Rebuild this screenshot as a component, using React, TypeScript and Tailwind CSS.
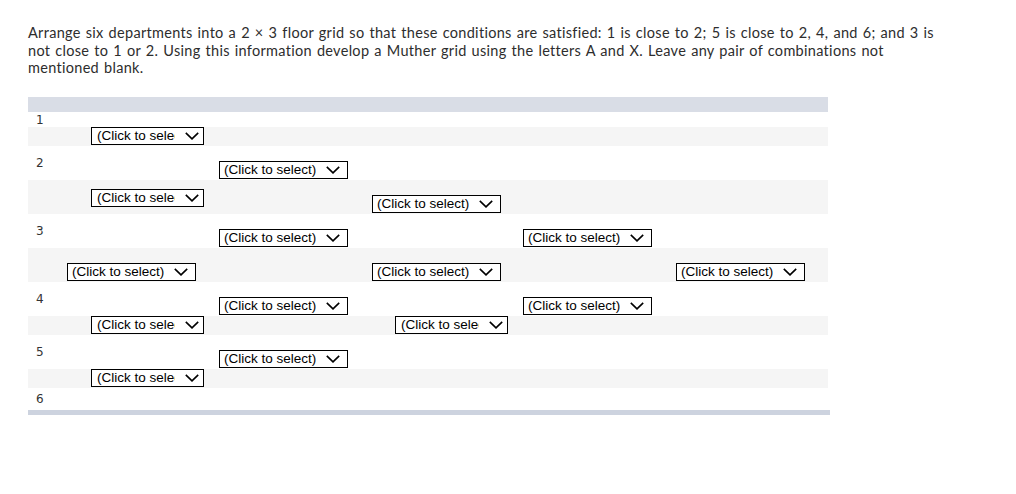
function Chevron() {
  return (
    <svg width="14" height="8" viewBox="0 0 14 8" className="shrink-0">
      <path d="M0.8 0.9 L7 6.9 L13.2 0.9" fill="none" stroke="#000" strokeWidth="1.6" />
    </svg>
  )
}

function Pick({ short = false, className = '' }: { short?: boolean; className?: string }) {
  return (
    <div
      className={`flex h-[18px] shrink-0 items-center border border-black bg-white ${
        short ? 'w-[113px] pl-[5px]' : 'w-[129px] pl-[4px]'
      } ${className}`}
    >
      <span
        className={`overflow-hidden whitespace-nowrap font-['Liberation_Sans',Arial,sans-serif] text-[13.5px] leading-[16px] text-black ${
          short ? 'w-[78px]' : 'w-[92px]'
        }`}
      >
        (Click to select)
      </span>
      <span className="ml-[10px] flex">
        <Chevron />
      </span>
    </div>
  )
}

function Num({ n }: { n?: string }) {
  return (
    <div className="w-[39px] shrink-0 self-center pl-[8px] font-['DejaVu_Sans',sans-serif] text-[12px] leading-[14px] text-[#333]">
      {n}
    </div>
  )
}

export default function App() {
  return (
    <div className="min-h-[494px] w-[1016px] bg-white pl-[28px] pt-[24px]">
      {/* Question text */}
      <p className="font-['Lato',sans-serif] text-[14.5px] leading-[17.5px] tracking-[0.3px] [word-spacing:1px] text-[#2d2d2d]">
        Arrange six departments into a 2 × 3 floor grid so that these conditions are satisfied: 1 is close to 2; 5 is close to 2, 4, and 6; and 3 is
        <br />
        not close to 1 or 2. Using this information develop a Muther grid using the letters A and X. Leave any pair of combinations not
        <br />
        mentioned blank.
      </p>

      {/* Muther grid */}
      <div className="mt-[20.5px] w-[802px]">
        <div className="h-[15px] w-[800px] bg-[#d9dde6]" />

        <div className="flex h-[15px] w-[800px]">
          <Num n="1" />
        </div>
        <div className="flex h-[19px] w-[800px] items-start bg-[#f5f5f5]">
          <Num />
          <Pick short className="ml-[24px]" />
        </div>

        <div className="flex h-[34px] w-[800px] items-start">
          <Num n="2" />
          <Pick className="ml-[152px] mt-[15px]" />
        </div>
        <div className="flex h-[34px] w-[800px] items-start bg-[#f5f5f5]">
          <Num />
          <Pick short className="ml-[24px] mt-[9px]" />
          <Pick className="ml-[168px] mt-[15px]" />
        </div>

        <div className="flex h-[34px] w-[800px] items-start">
          <Num n="3" />
          <Pick className="ml-[152px] mt-[15px]" />
          <Pick className="ml-[175px] mt-[15px]" />
        </div>
        <div className="flex h-[34px] w-[800px] items-start bg-[#f5f5f5]">
          <Num />
          <Pick className="mt-[15px]" />
          <Pick className="ml-[176px] mt-[15px]" />
          <Pick className="ml-[175px] mt-[15px]" />
        </div>

        <div className="flex h-[34px] w-[800px] items-start">
          <Num n="4" />
          <Pick className="ml-[152px] mt-[15px]" />
          <Pick className="ml-[175px] mt-[15px]" />
        </div>
        <div className="flex h-[19px] w-[800px] items-start bg-[#f5f5f5]">
          <Num />
          <Pick short className="ml-[24px]" />
          <Pick short className="ml-[191px]" />
        </div>

        <div className="flex h-[34px] w-[800px] items-start">
          <Num n="5" />
          <Pick className="ml-[152px] mt-[15px]" />
        </div>
        <div className="flex h-[19px] w-[800px] items-start bg-[#f5f5f5]">
          <Num />
          <Pick short className="ml-[24px]" />
        </div>

        <div className="flex h-[22px] w-[800px]">
          <Num n="6" />
        </div>
        <div className="h-[5px] w-[802px] bg-[#cdd3df]" />
      </div>
    </div>
  )
}
